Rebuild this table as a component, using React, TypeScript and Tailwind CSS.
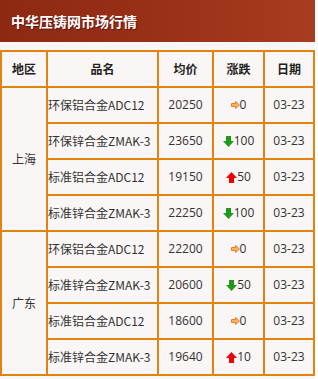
import React from "react";

type Chg = "flat" | "down" | "up";
interface Row { name: string; price: string; chg: Chg; val: string; date: string }

const groups: { region: string; rows: Row[] }[] = [
  {
    region: "上海",
    rows: [
      { name: "环保铝合金ADC12", price: "20250", chg: "flat", val: "0", date: "03-23" },
      { name: "环保锌合金ZMAK-3", price: "23650", chg: "down", val: "100", date: "03-23" },
      { name: "标准铝合金ADC12", price: "19150", chg: "up", val: "50", date: "03-23" },
      { name: "标准锌合金ZMAK-3", price: "22250", chg: "down", val: "100", date: "03-23" },
    ],
  },
  {
    region: "广东",
    rows: [
      { name: "环保铝合金ADC12", price: "22200", chg: "flat", val: "0", date: "03-23" },
      { name: "标准锌合金ZMAK-3", price: "20600", chg: "down", val: "50", date: "03-23" },
      { name: "标准铝合金ADC12", price: "18600", chg: "flat", val: "0", date: "03-23" },
      { name: "标准锌合金ZMAK-3", price: "19640", chg: "up", val: "10", date: "03-23" },
    ],
  },
];

function Icon({ t }: { t: Chg }) {
  if (t === "flat")
    return (
      <svg width="9" height="8" viewBox="0 0 9 8" className="shrink-0">
        <polygon points="0.5,2.5 4.5,2.5 4.5,0.5 8.5,4 4.5,7.5 4.5,5.5 0.5,5.5" fill="#fbb06a" stroke="#f07d22" strokeWidth="1" />
      </svg>
    );
  if (t === "down")
    return (
      <svg width="11" height="11" viewBox="0 0 11 11" className="shrink-0">
        <polygon points="3,0 8,0 8,5 11,5 5.5,11 0,5 3,5" fill="#1e9a1e" />
      </svg>
    );
  return (
    <svg width="11" height="11" viewBox="0 0 11 11" className="shrink-0">
      <polygon points="5.5,0 11,6 8,6 8,11 3,11 3,6 0,6" fill="#f00000" />
    </svg>
  );
}

const cell = "bg-[#faf6f5] h-[34px] flex items-center";
const cjk = { fontFamily: '"Noto Sans CJK SC", sans-serif' };

export default function App() {
  return (
    <div
      className="w-[318px] h-[379px] bg-white text-[12px] text-[#333]"
      style={{ fontFamily: '"Open Sans", "Noto Sans CJK SC", sans-serif' }}
    >
      <div className="w-[315px] h-[379px] bg-[#faf6f5]">
        <div className="h-[42px] flex items-center pl-[11px] bg-[linear-gradient(90deg,#8d2912_0%,#9a3118_55%,#a93c21_100%)]">
          <span
            className="text-white text-[14px] font-bold leading-none"
            style={{ ...cjk, textShadow: "1px 1px 1px rgba(60,0,0,0.6)" }}
          >
            中华压铸网市场行情
          </span>
        </div>
        <div className="mt-[8px] grid grid-cols-[44px_109px_53px_49px_48px] gap-[2px] p-[2px] bg-[#e2820f]">
          {["地区", "品名", "均价", "涨跌", "日期"].map((h) => (
            <div key={h} className={`${cell} justify-center font-bold text-[#222]`} style={cjk}>
              {h}
            </div>
          ))}
          {groups.map((g) => (
            <React.Fragment key={g.region}>
              <div className={`${cell} justify-center row-span-4 h-auto`} style={cjk}>{g.region}</div>
              {g.rows.map((r, i) => (
                <React.Fragment key={i}>
                  <div className={`${cell} pl-0 whitespace-nowrap overflow-hidden`} style={cjk}>{r.name}</div>
                  <div className={`${cell} justify-center`}>{r.price}</div>
                  <div className={`${cell} justify-center`}>
                    <Icon t={r.chg} />
                    <span>{r.val}</span>
                  </div>
                  <div className={`${cell} justify-center`}>{r.date}</div>
                </React.Fragment>
              ))}
            </React.Fragment>
          ))}
        </div>
      </div>
    </div>
  );
}
